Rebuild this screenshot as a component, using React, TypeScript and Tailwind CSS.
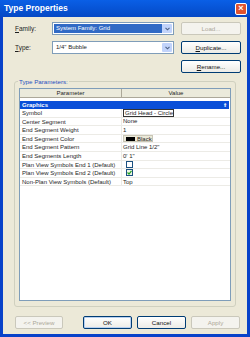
import React from "react";

const rows: { name: string; value: React.ReactNode }[] = [
  {
    name: "Symbol",
    value: (
      <div className="h-full border border-[#333] bg-white pl-[1px] leading-[7px]">Grid Head - Circle</div>
    ),
  },
  { name: "Center Segment", value: "None" },
  { name: "End Segment Weight", value: "1" },
  {
    name: "End Segment Color",
    value: (
      <div className="flex h-full items-center gap-[2px] border border-[#c9c6b6] bg-[#ece9d8] pl-[2px]">
        <span className="h-[4px] w-[9px] bg-black" />
        <span>Black</span>
      </div>
    ),
  },
  { name: "End Segment Pattern", value: "Grid Line 1/2\"" },
  { name: "End Segments Length", value: "0'  1\"" },
  {
    name: "Plan View Symbols End 1 (Default)",
    value: <span className="ml-[3px] block h-[7px] w-[7px] border border-[#1c5180] bg-white" />,
  },
  {
    name: "Plan View Symbols End 2 (Default)",
    value: (
      <span className="ml-[3px] flex h-[7px] w-[7px] items-center justify-center border border-[#1c5180] bg-[#eef5e6]">
        <svg width="5" height="5" viewBox="0 0 5 5">
          <path d="M0.5 2.5 L2 4 L4.5 0.8" stroke="#21a121" strokeWidth="1.2" fill="none" />
        </svg>
      </span>
    ),
  },
  { name: "Non-Plan View Symbols (Default)", value: "Top" },
];

function Btn({ label, disabled, w = "w-[60px]", def }: { label: React.ReactNode; disabled?: boolean; w?: string; def?: boolean }) {
  return (
    <div
      className={`${w} flex h-[13px] items-center justify-center rounded-[2px] border text-[6.2px] ${
        disabled
          ? "border-[#cac8bb] bg-[#f4f3ee] text-[#aca899]"
          : def
          ? "border-[#003c74] bg-gradient-to-b from-white to-[#ecebe6] text-[#111] shadow-[inset_0_0_0_1px_#b8d0f0]"
          : "border-[#003c74] bg-gradient-to-b from-white to-[#ecebe6] text-[#111]"
      }`}
    >
      {label}
    </div>
  );
}

function Combo({ children }: { children: React.ReactNode }) {
  return (
    <div className="flex h-[13px] w-[122px] items-center border border-[#7f9db9] bg-white p-[1px]">
      <div className="flex h-full flex-1 items-center">{children}</div>
      <div className="flex h-full w-[10px] items-center justify-center rounded-[1px] bg-[#c1d3fb]">
        <svg width="5" height="4" viewBox="0 0 5 4">
          <path d="M0.5 0.8 L2.5 2.8 L4.5 0.8" stroke="#4d6185" strokeWidth="1.1" fill="none" />
        </svg>
      </div>
    </div>
  );
}

export default function App() {
  return (
    <div
      className="flex h-[337px] w-[250px] flex-col bg-[#0842c9]"
      style={{ fontFamily: '"Liberation Sans", Arial, sans-serif' }}
    >
      {/* Title bar */}
      <div className="flex h-[17px] items-center justify-between bg-gradient-to-b from-[#0a5fe6] via-[#0754d6] to-[#0548c4] pl-[4px] pr-[3px]">
        <span className="text-[8.5px] font-bold text-white">Type Properties</span>
        <div className="flex h-[12px] w-[12px] items-center justify-center rounded-[2px] border border-white bg-[#e0532f] text-[9px] font-bold leading-none text-white">
          ×
        </div>
      </div>

      {/* Body */}
      <div className="mx-[3px] mb-[3px] flex flex-1 flex-col bg-[#ece9d8] text-[6px] text-[#1e1e1e]">
        <div className="mt-[5px] flex flex-col gap-[6px] pl-[12px] text-[6.5px]">
          <div className="flex items-center">
            <span className="w-[37px]">
              <u>F</u>amily:
            </span>
            <Combo>
              <span className="flex h-full flex-1 items-center bg-[#316ac5] pl-[2px] text-[6px] text-white">System Family: Grid</span>
            </Combo>
            <div className="ml-[7px]">
              <Btn label="Load..." disabled />
            </div>
          </div>
          <div className="flex items-center">
            <span className="w-[37px]">
              <u>T</u>ype:
            </span>
            <Combo>
              <span className="pl-[2px] text-[6px]">1/4" Bubble</span>
            </Combo>
            <div className="ml-[7px]">
              <Btn label={<span><u>D</u>uplicate...</span>} />
            </div>
          </div>
          <div className="flex justify-end pr-[6px]">
            <Btn label={<span><u>R</u>ename...</span>} />
          </div>
        </div>

        {/* Group box */}
        <div className="relative mx-[11px] mt-[8px] h-[226px] rounded-[3px] border border-[#d0d0bf] px-[4px] pb-[5px] pt-[6px]">
          <span className="absolute left-[3px] top-[-5px] bg-[#ece9d8] px-[1px] text-[6.2px] text-[#1f4fbf]">Type Parameters:</span>
          <div className="flex h-full flex-col border border-[#7f9db9] bg-white">
            <div className="flex h-[9px] border-b border-[#aca899] bg-[#ebeadb]">
              <div className="flex w-[102px] items-center justify-center border-r border-[#aca899]">Parameter</div>
              <div className="flex flex-1 items-center justify-center">Value</div>
            </div>
            <div className="h-[3px]" />
            <div className="mr-[1px] flex h-[8px] items-center justify-between bg-[#0a4fd8] pl-[2px] pr-[2px] font-bold text-white">
              <span>Graphics</span>
              <span className="text-[5px] leading-none">⇑</span>
            </div>
            {rows.map((r) => (
              <div key={r.name} className="flex h-[8.6px] border-b border-[#ecebe6] leading-[8px]">
                <div className="w-[102px] truncate border-r border-[#ecebe6] pl-[2px]">{r.name}</div>
                <div className="flex flex-1 items-center pl-[1px] pr-[1px]">{r.value}</div>
              </div>
            ))}
          </div>
        </div>

        {/* Bottom buttons */}
        <div className="mt-[9px] flex items-center pl-[12px]">
          <Btn label="<< Preview" disabled w="w-[48px]" />
          <div className="ml-[20px] flex gap-[5px]">
            <Btn label="OK" w="w-[49px]" def />
            <Btn label="Cancel" w="w-[49px]" />
            <Btn label="Apply" w="w-[49px]" disabled />
          </div>
        </div>
      </div>
    </div>
  );
}
